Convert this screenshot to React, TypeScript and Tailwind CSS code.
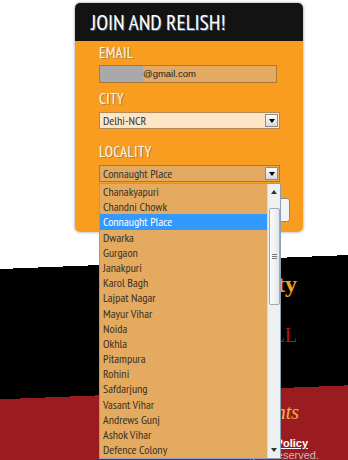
import React from "react"

const localities = [
  "Chanakyapuri",
  "Chandni Chowk",
  "Connaught Place",
  "Dwarka",
  "Gurgaon",
  "Janakpuri",
  "Karol Bagh",
  "Lajpat Nagar",
  "Mayur Vihar",
  "Noida",
  "Okhla",
  "Pitampura",
  "Rohini",
  "Safdarjung",
  "Vasant Vihar",
  "Andrews Gunj",
  "Ashok Vihar",
  "Defence Colony",
]

const uiFont = "font-['PT_Sans_Narrow','Liberation_Sans_Narrow','DejaVu_Sans_Condensed',Lato,sans-serif]"
const labelCls =
  "text-[15px] leading-[16px] tracking-[0.3px] text-[#fdf4e4] [text-shadow:1px_1px_0_rgba(90,110,140,0.55)]"

function ArrowButton() {
  return (
    <div className="w-[13px] h-full border border-[#8c8c8c] bg-[linear-gradient(#fbfbfb,#d9d9d9)] flex items-center justify-center">
      <span className="block w-0 h-0 border-l-[3px] border-r-[3px] border-t-[4px] border-l-transparent border-r-transparent border-t-black" />
    </div>
  )
}

function Panel() {
  return (
    <div className="absolute left-[75px] top-[3px] w-[228px] h-[229px] rounded-[5px] overflow-hidden shadow-[0_0_3px_rgba(0,0,0,0.45)] flex flex-col">
      <div className="h-[38px] bg-[#131313] pl-[16px] flex items-center">
        <h2 className={`${uiFont} text-[21.5px] leading-[24px] text-white [text-shadow:1px_1px_0_rgba(120,150,190,0.6)]`}>
          JOIN AND RELISH!
        </h2>
      </div>
      <div className={`${uiFont} flex-1 bg-[#f89d1f] pl-[24px] pt-[4px] flex flex-col`}>
        <label className={labelCls}>EMAIL</label>
        <div className="mt-[4px] w-[178px] h-[18px] border border-[#a8773a] bg-[#e3aa62] flex items-center">
          <span className="w-[43px] h-full bg-[#a9a9a9]" />
          <span className="font-['Liberation_Sans',Arial,sans-serif] text-[9.5px] text-[#222]">@gmail.com</span>
        </div>

        <label className={`${labelCls} mt-[8px]`}>CITY</label>
        <div className="mt-[5px] w-[181px] h-[17px] border border-[#b08a58] bg-[#fee5c6] flex items-center justify-between pl-[3px] pr-px py-px">
          <span className="text-[12px] leading-[14px] text-[#333]">Delhi-NCR</span>
          <ArrowButton />
        </div>

        <label className={`${labelCls} mt-[15px]`}>LOCALITY</label>
        <div className="mt-[5px] w-[181px] h-[17px] border border-[#a8773a] bg-[#e2a962] flex items-center justify-between pl-[3px] pr-px py-px">
          <span className="text-[12px] leading-[14px] text-[#333]">Connaught Place</span>
          <ArrowButton />
        </div>

        <div className="mt-[16px] pr-[13px] flex justify-end">
          <button className="w-[80px] h-[24px] rounded-[3px] border border-[#8a8a8a] bg-[#f3f3f3]" />
        </div>
      </div>
    </div>
  )
}

function LocalityList() {
  return (
    <div className={`${uiFont} absolute left-[99px] top-[183px] w-[182px] h-[276px] border border-[#8aa0b8] bg-[#e4aa5f] flex`}>
      <ul className="flex-1 flex flex-col">
        {localities.map((name) => (
          <li
            key={name}
            className={
              name === "Connaught Place"
                ? "h-[15.2px] leading-[15.2px] pl-[3px] text-[12px] bg-[#3399ff] text-white"
                : "h-[15.2px] leading-[15.2px] pl-[3px] text-[12px] text-[#3b3024]"
            }
          >
            {name}
          </li>
        ))}
      </ul>
      {/* scrollbar */}
      <div className="w-[13px] bg-[#edeff1] border-l border-[#d6d9dc] flex flex-col items-center">
        <div className="h-[16px] flex items-center justify-center">
          <span className="block w-0 h-0 border-l-[3px] border-r-[3px] border-b-[4px] border-l-transparent border-r-transparent border-b-[#333]" />
        </div>
        <div className="mt-[8px] w-[11px] h-[97px] rounded-[2px] border border-[#a4a7ab] bg-[linear-gradient(90deg,#fdfdfd,#e3e5e8)] flex flex-col items-center justify-center gap-[1px]">
          <span className="block w-[5px] h-px bg-[#777]" />
          <span className="block w-[5px] h-px bg-[#777]" />
          <span className="block w-[5px] h-px bg-[#777]" />
        </div>
        <div className="flex-1" />
        <div className="h-[16px] flex items-center justify-center">
          <span className="block w-0 h-0 border-l-[3px] border-r-[3px] border-t-[4px] border-l-transparent border-r-transparent border-t-[#333]" />
        </div>
      </div>
    </div>
  )
}

export default function App() {
  return (
    <div className="relative w-[348px] h-[460px] overflow-hidden bg-[linear-gradient(177.7deg,#fff_268.8px,#000_268.8px,#000_399px,#9b1c20_399px)] font-['Liberation_Serif',serif]">
      {/* page content behind the popup */}
      <div className="pt-[270px] flex flex-col">
        <p className="w-[297px] text-right text-[24px] leading-[28px] font-bold text-[#f0a020]">Your City</p>
        <p className="mt-[25px] w-[297px] text-right text-[20px] leading-[24px] text-[#b3141c]">EXPLORE IT ALL</p>
        <p className="mt-[53px] w-[299px] text-right text-[20px] leading-[24px] italic text-[#e9b64b]">Restaurants</p>
        <p className="mt-[13px] w-[308px] text-right font-['Liberation_Sans',Arial,sans-serif] text-[11px] leading-[12px] font-bold text-white underline">
          Privacy Policy
        </p>
        <p className="w-[319px] text-right font-['Liberation_Sans',Arial,sans-serif] text-[11px] leading-[12px] text-[#bdbdbd]">
          All rights reserved.
        </p>
      </div>

      <Panel />
      <LocalityList />
    </div>
  )
}
